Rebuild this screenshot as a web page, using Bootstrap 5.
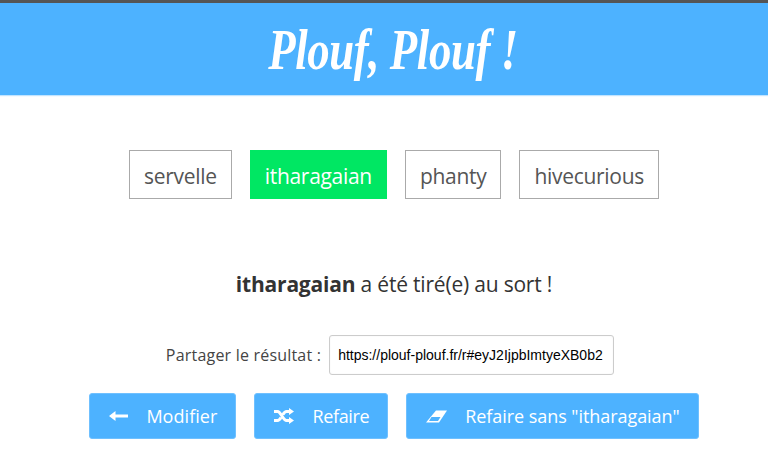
<!DOCTYPE html>
<html lang="fr">
<head>
<meta charset="utf-8">
<title>Plouf, Plouf !</title>
<link href="https://cdn.jsdelivr.net/npm/bootstrap@5.3.0/dist/css/bootstrap.min.css" rel="stylesheet">
<style>
html,body{height:471px;overflow:hidden}
body{font-family:"Open Sans","Noto Sans",sans-serif;color:#333;background:#fff;border-top:3px solid #555}
.site-head{background:#4db2ff;height:92px;box-shadow:0 1px 1px rgba(77,178,255,.35);padding-left:18px}
.site-title{font-family:"Liberation Serif",serif;font-style:italic;font-weight:700;font-size:56px;line-height:94px;color:#fff;margin:0;letter-spacing:-.5px;transform:scaleX(.8)}
.page-body{padding-left:20px}
.choices{margin-top:55px;gap:18px}
.choice{height:49px;line-height:51px;padding:0 14px;border:1px solid #aaa;font-size:21px;color:#555;letter-spacing:-.3px}
.choice-on{background:#00e763;border-color:#00e763;color:#fff}
.verdict{margin:70px 0 0;font-size:21px;line-height:30px;letter-spacing:-.2px}
.share{margin-top:36px;gap:8px;padding-right:8px}
.share-lbl{font-size:16px;color:#444;letter-spacing:.2px}
.share-in{width:285px;height:40px;border:1px solid #ccc;border-radius:3px;padding:0 2px 0 8px;font-family:"Liberation Sans",sans-serif;font-size:14px;color:#000;background:#fff;box-shadow:inset 0 0 2px rgba(0,0,0,.06)}
.acts{margin-top:18px;gap:18px}
.act{background:#4db2ff;color:#fff;border:1px solid #6fc0ff;border-radius:3px;height:46px;font-size:18px;letter-spacing:-.06px;padding:0 18px 0 19px;gap:18px}
.act:hover{background:#4db2ff;color:#fff}
.act svg{display:block;flex:none}
.act-mod{letter-spacing:.05px}
.act-redo{letter-spacing:-.35px}
</style>
</head>
<body>
<header class="site-head text-center"><h1 class="site-title">Plouf, Plouf !</h1></header>
<main class="page-body">
<div class="choices d-flex justify-content-center">
<span class="choice">servelle</span>
<span class="choice choice-on">itharagaian</span>
<span class="choice">phanty</span>
<span class="choice">hivecurious</span>
</div>
<p class="verdict text-center"><strong>itharagaian</strong> a été tiré(e) au sort !</p>
<div class="share d-flex justify-content-center align-items-center">
<label class="share-lbl" for="lien">Partager le résultat :</label>
<input id="lien" class="share-in" type="text" value="https://plouf-plouf.fr/r#eyJ2IjpbImtyeXB0b2" readonly>
</div>
<div class="acts d-flex justify-content-center">
<a class="act act-mod btn d-flex align-items-center" href="#">
<svg width="19" height="12" viewBox="0 0 19 12" fill="#fff"><path d="M0 6 6.500 1V4.600H19V7.400H6.500V11z"/></svg>Modifier</a>
<a class="act act-redo btn d-flex align-items-center" href="#">
<svg width="20" height="16" viewBox="0 0 20 16" fill="none" stroke="#fff" stroke-width="3"><path d="M0 3.500h3.500c3.500 0 5.500 9 9 9H16M0 12.500h3.500c1.500 0 2.600-1.500 3.500-3M16 3.500h-3.500c-1.500 0-2.600 1.500-3.500 3"/><path d="M15 0l5 3.500-5 3.500zM15 9l5 3.500-5 3.500z" fill="#fff" stroke="none"/></svg>Refaire</a>
<a class="act btn d-flex align-items-center" href="#">
<svg width="21" height="13" viewBox="0 0 21 13"><path d="M10 .5H21L13 12.500H0z" fill="#fff"/><path d="M5.500 7 3 11H12L14.500 7z" fill="#4db2ff"/></svg>Refaire sans "itharagaian"</a>
</div>
</main>
</body>
</html>
